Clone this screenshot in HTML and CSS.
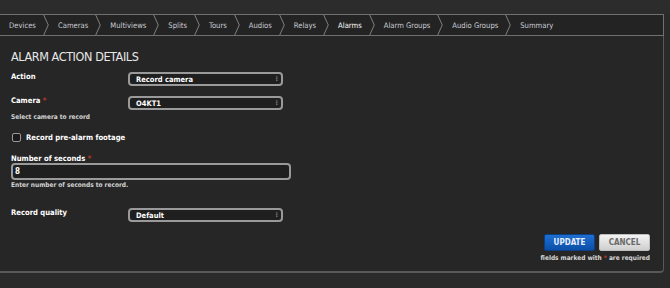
FILE: index.html
```html
<!DOCTYPE html>
<html>
<head>
<meta charset="utf-8">
<link rel="stylesheet" href="styles.css">
</head>
<body>
<div class="top-strip"></div>
<nav class="tabs">
  <span class="tab">Devices</span><svg class="chev" viewBox="0 0 6 22"><path d="M0.5 0 L5.5 11 L0.5 22"/></svg>
  <span class="tab">Cameras</span><svg class="chev" viewBox="0 0 6 22"><path d="M0.5 0 L5.5 11 L0.5 22"/></svg>
  <span class="tab">Multiviews</span><svg class="chev" viewBox="0 0 6 22"><path d="M0.5 0 L5.5 11 L0.5 22"/></svg>
  <span class="tab">Splits</span><svg class="chev" viewBox="0 0 6 22"><path d="M0.5 0 L5.5 11 L0.5 22"/></svg>
  <span class="tab">Tours</span><svg class="chev" viewBox="0 0 6 22"><path d="M0.5 0 L5.5 11 L0.5 22"/></svg>
  <span class="tab">Audios</span><svg class="chev" viewBox="0 0 6 22"><path d="M0.5 0 L5.5 11 L0.5 22"/></svg>
  <span class="tab">Relays</span><svg class="chev" viewBox="0 0 6 22"><path d="M0.5 0 L5.5 11 L0.5 22"/></svg>
  <span class="tab active">Alarms</span><svg class="chev" viewBox="0 0 6 22"><path d="M0.5 0 L5.5 11 L0.5 22"/></svg>
  <span class="tab">Alarm Groups</span><svg class="chev" viewBox="0 0 6 22"><path d="M0.5 0 L5.5 11 L0.5 22"/></svg>
  <span class="tab">Audio Groups</span><svg class="chev" viewBox="0 0 6 22"><path d="M0.5 0 L5.5 11 L0.5 22"/></svg>
  <span class="tab">Summary</span>
</nav>
<main class="panel">
  <h1 class="title">ALARM ACTION DETAILS</h1>
  <div class="row">
    <label class="lbl">Action</label>
    <div class="select">Record camera<span class="arrows">⁝</span></div>
  </div>
  <div class="row row-cam">
    <label class="lbl">Camera <span class="req">*</span></label>
    <div class="select">O4KT1<span class="arrows">⁝</span></div>
  </div>
  <div class="help">Select camera to record</div>
  <div class="check-row">
    <span class="checkbox"></span><span class="lbl">Record pre-alarm footage</span>
  </div>
  <div class="lbl lbl-block">Number of seconds <span class="req">*</span></div>
  <div class="input">8</div>
  <div class="help help-tight">Enter number of seconds to record.</div>
  <div class="row row-quality">
    <label class="lbl">Record quality</label>
    <div class="select">Default<span class="arrows">⁝</span></div>
  </div>
  <div class="actions">
    <div class="buttons">
      <button class="btn btn-primary">UPDATE</button>
      <button class="btn btn-cancel">CANCEL</button>
    </div>
    <div class="note">fields marked with <span class="req">*</span> are required</div>
  </div>
</main>
<div class="bottom"></div>
</body>
</html>
```

FILE: styles.css
```css
* { box-sizing: border-box; }
html, body { margin: 0; padding: 0; }
body {
  width: 670px;
  height: 288px;
  overflow: hidden;
  background: #2a2a2a;
  font-family: "DejaVu Sans Condensed", "DejaVu Sans", sans-serif;
  color: #e6e6e6;
}
.top-strip { height: 14px; background: #2c2c2c; }
.tabs {
  display: flex;
  align-items: center;
  width: 664px;
  height: 22px;
  background: #232323;
  border: 1px solid #707070;
  border-left: none;
  font-size: 7.6px;
  color: #c9ccd4;
}
.tab { padding: 0 7px 0 9px; white-space: nowrap; }
.tab:first-child { padding-left: 9px; }
.tab.active { color: #ffffff; }
.chev { width: 6px; height: 20px; flex: none; margin: 0; }
.chev path { fill: none; stroke: #8a8a8a; stroke-width: 1; }
.panel {
  width: 664px;
  height: 237px;
  background: #262626;
  border-right: 1px solid #585858;
  border-bottom: 2px solid #585858;
  border-bottom-right-radius: 4px;
  padding: 14px 0 0 11px;
  position: relative;
}
.title {
  margin: 0 0 8px 0;
  font-family: "DejaVu Sans Condensed", sans-serif;
  font-weight: normal;
  font-size: 12.5px;
  letter-spacing: -0.4px;
  color: #e8e8e8;
  line-height: 14px;
}
.lbl { font-weight: bold; font-size: 7.6px; color: #ffffff; }
.req { color: #c0392b; }
.row { display: flex; align-items: center; height: 14px; }
.row .lbl { width: 117px; align-self: flex-start; }
.row-cam { margin-top: 10px; }
.select {
  width: 155px;
  height: 14px;
  border: 2px solid #9a9a9a;
  border-radius: 4px;
  background: #1f1f1f;
  font-weight: bold;
  font-size: 7.5px;
  color: #ffffff;
  padding: 0 0 0 6px;
  display: flex;
  align-items: center;
  justify-content: space-between;
}
.arrows { color: #888; font-size: 7px; padding-right: 3px; }
.help { font-size: 6.5px; font-weight: bold; color: #d4d4d4; margin-top: 3px; }
.help-tight { margin-top: 1px; }
.check-row { display: flex; align-items: center; margin-top: 11px; gap: 5px; height: 10px; }
.checkbox {
  width: 9px; height: 9px; border: 1px solid #9a9a9a; border-radius: 2px; background: #1a1a1a; margin-left: 1px;
}
.lbl-block { margin-top: 12px; }
.input {
  width: 280px;
  height: 17px;
  border: 2px solid #9a9a9a;
  border-radius: 4px;
  background: #1f1f1f;
  font-weight: bold;
  font-size: 8px;
  color: #ffffff;
  padding-left: 2px;
  display: flex;
  align-items: center;
}
.row-quality { margin-top: 19px; }
.actions {
  position: absolute;
  right: 13px;
  top: 198px;
  display: flex;
  flex-direction: column;
  align-items: flex-end;
}
.buttons { display: flex; gap: 4px; }
.btn {
  font-family: inherit;
  font-weight: bold;
  font-size: 8px;
  height: 17px;
  width: 51px;
  border-radius: 2px;
  padding: 0;
}
.btn-primary {
  background: linear-gradient(#1f6fd1, #0b4fa8);
  border: 1px solid #0a3f86;
  color: #e8eefc;
}
.btn-cancel {
  background: linear-gradient(#f3f3f3, #cfcfcf);
  border: 1px solid #bdbdbd;
  color: #6a6a6a;
}
.note { font-size: 6.5px; font-weight: bold; color: #d8d8d8; margin-top: 3px; }
```
